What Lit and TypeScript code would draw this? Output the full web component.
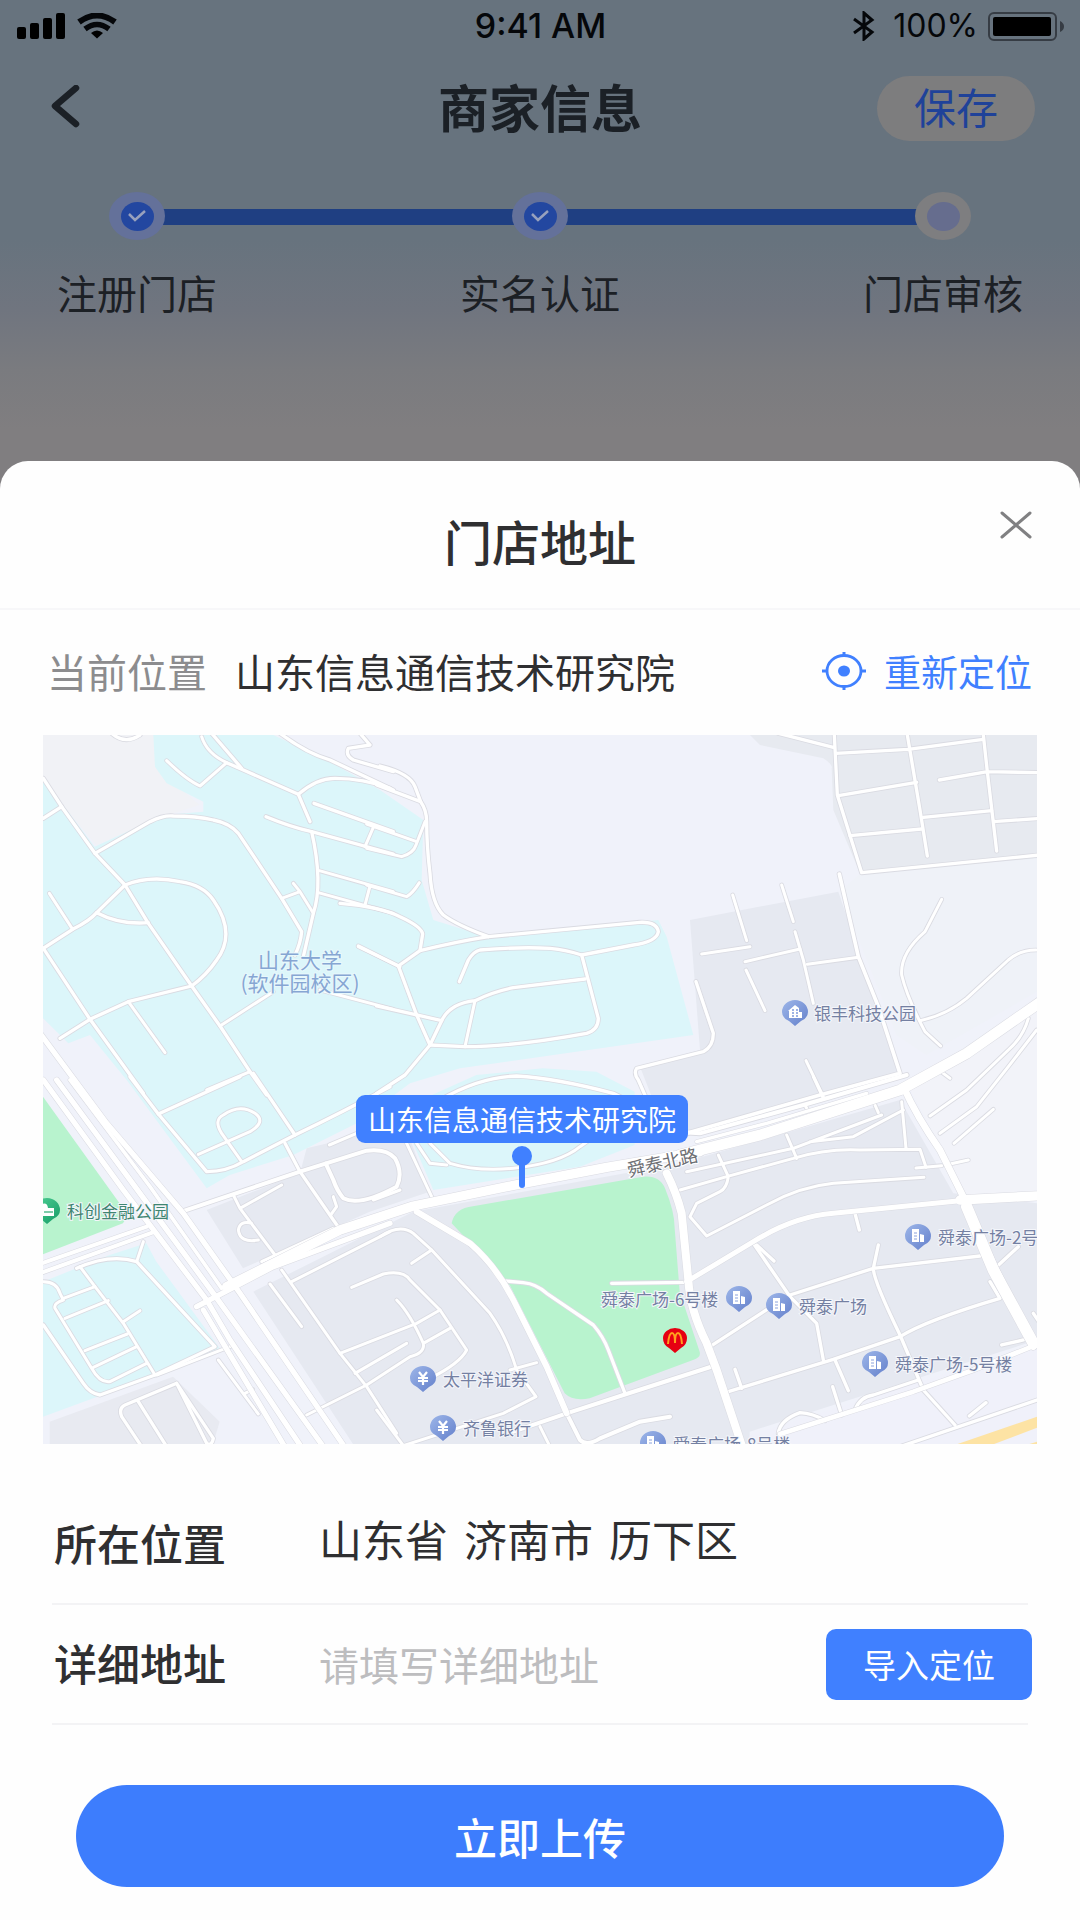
import { LitElement, html, svg, css } from "lit";
import { customElement, property } from "lit/decorators.js";

/* Map survey sheets: origin of each sheet on the map canvas; road data uses sheet units (3 per map unit). */
const SHEETS: Record<string, string> = {
  A: "translate(-3 -5) scale(.33333)",
  B: "translate(337 -5) scale(.33333)",
  C: "translate(657 -5) scale(.33333)",
  D: "translate(-3 345) scale(.33333)",
  E: "translate(337 345) scale(.33333)",
  F: "translate(657 345) scale(.33333)",
};

type Road = [sheet: string, width: number, d: string];

const ROADS: Road[] = [
  // north-west campus
  ["A", 10, "M10 145L65 230L165 370L255 465L325 580L455 768L540 888L630 1025L680 1095"],
  ["A", 10, "M10 265L65 230"],
  ["A", 10, "M215 10Q255 45 300 15"],
  ["A", 10, "M165 370L330 275Q370 255 400 258Q470 258 520 270Q570 280 595 310L725 505L785 605Q782 640 765 675"],
  ["A", 10, "M170 548L255 465Q330 435 420 455Q490 465 520 510Q590 610 530 690Q500 735 455 768L265 815L150 868L60 925"],
  ["A", 9, "M28 490L98 598"],
  ["A", 10, "M10 655L98 598Q150 572 170 548Q240 585 325 578"],
  ["A", 10, "M10 655L150 868L310 1090"],
  ["A", 9, "M265 815L375 968"],
  ["A", 9, "M380 92Q440 150 480 168L560 98Q500 70 485 20"],
  ["A", 10, "M515 10L605 115"],
  ["A", 10, "M560 98L610 120L775 193L810 275"],
  ["A", 10, "M775 193Q830 145 885 145Q970 145 1050 175"],
  ["A", 10, "M720 10Q800 70 870 90L1060 180"],
  ["A", 10, "M960 10L990 45L925 55Q915 75 940 90L1060 125"],
  ["A", 10, "M678 260Q750 290 815 305L1060 372"],
  ["A", 10, "M822 220L1060 305"],
  ["A", 9, "M1000 292L975 350"],
  ["A", 10, "M815 305Q850 460 820 550L790 680"],
  ["A", 9, "M838 422L1060 485"],
  ["A", 9, "M835 488L1060 550"],
  ["A", 9, "M990 468L975 525"],
  ["A", 9, "M725 505L780 485L820 550M780 485L760 460"],
  ["A", 9, "M540 888L700 785"],
  ["A", 9, "M955 650L1080 710"],
  ["A", 9, "M840 780L1060 838"],
  ["A", 9, "M500 1080L630 1025"],
  // campus, east half
  ["B", 10, "M0 108Q90 130 105 170L122 215"],
  ["B", 10, "M-10 165L122 215Q140 240 140 275Q140 350 150 430Q155 520 190 555Q230 585 325 620"],
  ["B", 9, "M-40 282L110 335"],
  ["B", 9, "M-40 355L65 380Q100 370 108 345L135 275"],
  ["B", 9, "M-40 465L80 500Q98 490 118 458"],
  ["B", 10, "M-120 520Q0 530 60 560Q125 590 128 612L120 662L55 708L110 855L150 945L75 1035L-10 1090"],
  ["B", 10, "M-65 648L55 708"],
  ["B", 10, "M120 662Q230 635 325 620L780 577Q830 575 835 605Q830 635 760 645L605 675"],
  ["B", 10, "M238 755L265 690Q280 665 300 660Q420 650 510 655Q560 660 605 675L655 865Q655 900 620 910Q400 950 255 950L150 945"],
  ["B", 10, "M-10 828L110 855L185 872L150 945"],
  ["B", 10, "M185 872Q210 820 285 812Q340 785 400 773L615 747"],
  ["B", 9, "M285 812L255 950"],
  ["B", 10, "M180 1110Q300 1040 410 1038Q530 1045 700 1090L760 1120"],
  // central block
  ["B", 9, "M965 672L1110 650"],
  ["B", 10, "M948 755L1000 910Q1000 950 970 965L770 1015Q760 1030 775 1050L810 1130"],
  ["C", 9, "M98 495L140 632"],
  ["C", 9, "M245 465L280 575M285 605L310 690L340 820"],
  ["C", 9, "M135 695L300 657M322 703L475 682M138 720L195 842"],
  ["C", 11, "M418 432L475 680L535 830L600 1030L360 1095L-40 1210"],
  ["C", 9, "M318 992L370 1100"],
  // north-east grid
  ["C", 10, "M235 10L400 52M403 15L412 195L485 428L1020 375"],
  ["C", 10, "M408 70L625 58L850 28M622 15L660 240L682 378"],
  ["C", 10, "M415 197L650 157M450 317L665 297M670 262L875 242"],
  ["C", 10, "M850 15L862 125L890 363M718 150L862 125L1020 128M880 275L1020 265"],
  // eastern slope
  ["C", 9, "M725 508L675 605Q600 670 605 735Q620 800 675 905L722 948"],
  ["C", 9, "M660 872Q740 855 800 805L925 690Q960 660 1008 660"],
  ["C", 9, "M985 865Q970 920 925 960L800 1080L690 1158"],
  ["C", 9, "M1010 900L925 1010L830 1130L720 1210"],
  ["F", 9, "M880 88L762 190"],
  ["C", 9, "M710 1015L750 1045"],
  // south-west campus and surroundings
  ["D", 10, "M270 -10L355 102L500 275Q560 275 610 245L765 165Q900 100 1050 20"],
  ["D", 10, "M355 102L600 -10M640 -20L765 165"],
  ["D", 9, "M475 223L630 155Q680 125 645 100Q600 70 550 105Q520 120 545 160L605 245"],
  ["D", 10, "M735 190L780 275L880 420L905 455"],
  ["D", 12, "M425 395L780 275L980 212Q1040 205 1065 235Q1090 280 1070 320Q960 380 910 355Q890 330 880 300L857 250"],
  ["D", 9, "M868 195L950 160"],
  ["D", 9, "M580 345L600 385L725 315M600 385L705 525M655 480Q600 490 595 450Q600 420 635 430"],
  ["D", 9, "M665 545L880 445M880 350L890 380L872 405"],
  ["D", 10, "M110 565Q210 520 290 545L525 800L345 885L180 945Q150 940 130 910L10 735"],
  ["D", 9, "M310 485L290 545M120 560L165 620L250 730L345 885"],
  ["D", 9, "M10 605Q50 605 60 640L70 660Q40 670 45 685L155 865Q180 910 210 905L320 850"],
  ["D", 9, "M70 655L165 620M75 715L205 662M250 725L300 692M135 812L262 762M160 862L290 800"],
  ["D", 10, "M305 1100L245 1010Q235 985 255 975L410 910L520 1075Q515 1100 500 1090L410 910M295 965L380 1100"],
  ["D", 9, "M350 885L570 800M535 840L655 1002M615 940L638 928"],
  ["D", 9, "M690 612L785 740M725 570L900 820L980 920L1070 1060"],
  ["D", 9, "M755 605L1050 455M935 622L1030 582Q1090 570 1110 600L1200 690L1280 810Q1260 850 1170 895"],
  ["D", 9, "M900 820L1130 730L1200 690M945 880L1100 790"],
  ["D", 9, "M800 1005L980 915L1110 830Q1155 820 1150 790Q1110 700 1070 660M1150 790L1230 745"],
  ["D", 9, "M1020 470Q1080 430 1120 460L1175 510L1350 700Q1400 770 1430 870L1488 950L1390 1000L1050 1110"],
  ["D", 9, "M1115 550L1175 510"],
  ["E", 9, "M-10 990L80 1110"],
  // shapes around the marker
  ["E", 9, "M80 190L155 350M110 190L150 250L200 255M150 190L210 250Q290 275 400 265Q540 250 600 200L650 165"],
  ["E", 9, "M60 330L-20 360"],
  ["E", 10, "M365 602L430 608Q470 612 500 640L640 735Q670 770 685 810L735 940"],
  ["E", 10, "M695 610L920 607"],
  ["E", 9, "M480 1040L510 1100M390 870L470 848"],
  // south-east streets
  ["F", 12, "M-160 150L0 160L310 75L620 -15"],
  ["F", 9, "M340 -10L370 55M315 75L335 115M525 75L535 98"],
  ["F", 9, "M-40 275L280 205L545 105M330 185L460 170L610 90"],
  ["F", 9, "M-60 330L80 290L280 235Q380 205 480 210L660 208L678 262M55 225L85 290Q80 325 60 335L-10 370L-30 410L20 468L200 375Q300 320 400 310L672 292M260 165L290 235M605 65L618 205"],
  ["F", 9, "M648 264L725 257M750 252L805 240"],
  ["F", 10, "M465 400L478 450M160 490L270 650L350 730L370 840M170 495L222 543"],
  ["F", 10, "M270 645L520 565L840 528M535 495L520 565Q520 600 600 765L670 930L765 1035"],
  ["F", 10, "M85 935L400 838L600 770Q680 720 900 655L870 605"],
  ["F", 10, "M30 800L260 650M105 868L125 925M405 840L445 932"],
  ["F", 10, "M235 1060Q240 1020 300 998Q340 1000 375 1022M465 990Q480 950 520 945L655 900M398 920L425 1005"],
  ["F", 10, "M890 560L955 500M905 795L970 780M1000 700L1020 730"],
  ["F", 10, "M600 1100L1020 957M808 1008L858 968"],
  ["E", 12, "M400 1055L560 1000L730 945L1010 855M560 1000L600 1080Q620 1100 660 1075L780 1025L870 1010"],
];

const MAIN_ROADS: Road[] = [
  ["D", 16, "M0 -140L200 130L430 400L600 640L920 1110"],
  ["D", 16, "M10 0L250 330L500 660L570 780L790 1110"],
  ["D", 16, "M50 0L300 340L520 640L850 1100"],
  ["D", 11, "M90 0L330 320L545 625"],
  ["D", 16, "M490 690L740 1110"],
  ["D", 12, "M0 552L320 440M0 580L345 455"],
  ["D", 16, "M470 680L700 560L1050 430"],
  ["D", 28, "M560 620L900 450L1120 378L1450 310L1700 262L1980 215"],
  ["F", 32, "M-60 225L180 165L600 30L800 -80L1030 -240"],
  ["F", 10, "M-10 185L200 130L500 40"],
  ["E", 18, "M110 395L270 490Q350 560 400 660L500 860L560 1000"],
  ["E", 24, "M860 280Q890 340 905 400L925 600Q930 690 980 790L1010 870L1090 1110"],
  ["F", 20, "M610 20Q650 110 720 210L790 350L840 470L1000 800"],
  ["F", 28, "M780 360L1020 347"],
  ["F", 15, "M-40 605L160 485Q280 410 400 400L780 362"],
  ["F", 34, "M800 380L880 570L1000 790"],
  ["F", 14, "M240 1062L640 935L820 870L1020 790"],
];

type Poi = [kind: "building" | "house" | "yen" | "leaf", x: number, y: number, tx: number, label: string];

const POIS: Poi[] = [
  ["house", 752, 277, 771, "银丰科技公园"],
  ["leaf", 4, 475, 24, "科创金融公园"],
  ["building", 696, 563, 558, "舜泰广场-6号楼"],
  ["building", 736, 570, 756, "舜泰广场"],
  ["building", 875, 501, 895, "舜泰广场-2号楼"],
  ["building", 832, 628, 852, "舜泰广场-5号楼"],
  ["yen", 380, 643, 400, "太平洋证券"],
  ["yen", 400, 692, 420, "齐鲁银行"],
  ["building", 610, 708, 630, "舜泰广场-8号楼"],
];

const GLYPHS = {
  building: svg`<path d="M-6 6V-7H1V6ZM2 6V-2L6 -1V6Z" fill="#fff"/><path d="M-4 -3H-1M-4 0H-1M-4 3H-1" stroke="#8aa2dc" stroke-width="1"/>`,
  house: svg`<path d="M-7 -1L0 -7L4 -4V0H7V6H-6V-1Z" fill="#fff"/><path d="M-3 1H-1M-3 4H-1M1 1H3M1 4H3M-3 -2H-1M1 -2H3" stroke="#7f9bdb" stroke-width="1.4"/>`,
  yen: svg`<path d="M-4 -6L0 -1L4 -6M0 -1V7M-5 0H5M-5 3H5" stroke="#fff" stroke-width="2.2" fill="none"/>`,
  leaf: svg`<path d="M-7 -5Q0 -9 1 -2H7V6H-7Z" fill="#fff"/><path d="M-3 2H6" stroke="#2bab74" stroke-width="1.2"/>`,
};

@customElement("district-map")
export class DistrictMap extends LitElement {
  @property() place = "";

  static styles = css`
    :host { display: block; position: relative; overflow: hidden; }
    .canvas { display: block; width: 100%; height: auto; font-family: "Noto Sans CJK SC", sans-serif; }
    .casing path { fill: none; stroke: #dadbe2; stroke-linejoin: round; stroke-linecap: round; }
    .surface path { fill: none; stroke: #fff; stroke-linejoin: round; stroke-linecap: round; }
    .poi { font-size: 17px; fill: #7480a2; stroke: #f4f6fb; stroke-width: 2px; paint-order: stroke; }
    .poi.park { fill: #3f8571; }
    .campus { font-size: 21px; fill: #86a6d3; text-anchor: middle; stroke: #e8f8fc; stroke-width: 2px; paint-order: stroke; }
    .street { font-size: 18px; fill: #6d6f74; text-anchor: middle; stroke: #fff; stroke-width: 2px; paint-order: stroke; }
    .marker {
      position: absolute; left: 48.2%; top: 360px; transform: translateX(-50%);
      display: flex; flex-direction: column; align-items: center; gap: 3px;
    }
    .bubble {
      padding: 0 12px; border-radius: 9px; background: #4080ff; color: #fff;
      font-size: 28px; line-height: 48px; white-space: nowrap;
    }
    .pin { display: block; width: 20px; height: 42px; }
  `;

  private strokes(list: Road[], extra: number) {
    return list.map(([s, w, d]) => svg`<path transform=${SHEETS[s]} stroke-width=${w + extra} d=${d}></path>`);
  }

  render() {
    return html`
      <svg class="canvas" viewBox="0 0 994 709" role="img" aria-label=${this.place}>
        <defs>
          <linearGradient id="blue" x1="0" y1="0" x2="1" y2="1">
            <stop offset="0" stop-color="#9db6e9" /><stop offset="1" stop-color="#6480cb" />
          </linearGradient>
          <linearGradient id="green" x1="0" y1="0" x2="1" y2="1">
            <stop offset="0" stop-color="#4fcf94" /><stop offset="1" stop-color="#159c67" />
          </linearGradient>
        </defs>
        <rect width="994" height="709" fill="#f0f2fa" />
        <g transform="scale(.33333)">
          <path fill="#f1f2f6" d="M0 0H340V100L470 210L360 245L160 330L0 140Z" />
          <path fill="#eff2f8" d="M2470 400L2983 370V770L2650 960L2560 900L2390 470Z" />
          <path fill="#f2f3f9" d="M2600 1060L2983 800V1380H2770Z" />
          <path fill="#e7eaf0" d="M2121 0L2151 30L2341 70Q2371 90 2366 100L2371 225L2451 415L2983 370V0Z" />
          <path fill="#dcf6fa" d="M331 0L336 95L371 145L481 200V230L361 240L155 335L0 130V850L76 925L141 900L251 1035L491 1360L560 1320L751 1260L941 1165L1101 1045L1251 1000L1951 900L1871 605L1846 555L1331 605L1171 555L1136 435L1141 255L1011 165L851 75L691 0Z" />
          <path fill="#dcf6fa" d="M1100 1110L1300 1020L1500 1000L1660 1010L1775 1070V1230L1611 1295L1171 1365L1100 1200Z" />
          <path fill="#dcf6fa" d="M0 1640L200 1560L310 1525L340 1580L530 1840L340 1920L0 2045Z" />
          <path fill="#e6e9f1" d="M1941 555L2386 470L2571 1015L1971 1190L1871 1200L1791 995L1971 945Z" />
          <path fill="#e6e9f1" d="M491 1425L771 1315L791 1240L1000 1190L1100 1210L1160 1370L980 1430L600 1600Z" />
          <path fill="#e6e9f1" d="M631 1670L1011 1480L1111 1430L1911 1285L2571 1095L2731 1375L2983 1405V1815L2120 2090V2127H930Z" />
          <path fill="#e8eaf1" d="M20 2060L390 1925L530 2060L510 2127H20Z" />
          <path fill="#f0f1fa" d="M2120 2100L2983 1830V2127H2120Z" />
          <path fill="#b8f3ce" d="M0 1085L255 1440L240 1465L0 1558Z" />
          <path fill="#b8f3ce" d="M1226 1465Q1235 1420 1290 1414L1800 1325Q1850 1320 1866 1360Q1895 1430 1895 1480L1910 1670L1970 1850Q1975 1868 1950 1875L1640 1990Q1590 2000 1565 1975L1400 1650Z" />
        </g>
        <g class="casing">${this.strokes(ROADS, 5)}</g>
        <g class="surface">${this.strokes(ROADS, 0)}</g>
        <g class="casing">${this.strokes(MAIN_ROADS, 3)}</g>
        <g class="surface">${this.strokes(MAIN_ROADS, 0)}</g>
        <path transform=${SHEETS.F} d="M770 1093L1012 1010V1043L880 1093ZM985 1093L1012 1085V1093Z" fill="#fde3a4" />
        <text class="campus" x="257" y="233">山东大学</text>
        <text class="campus" x="257" y="256">(软件园校区)</text>
        <text class="street" transform="translate(621 434) rotate(-13)">舜泰北路</text>
        ${POIS.map(([kind, x, y, tx, label]) => svg`
          <g transform="translate(${x} ${y})">
            <path d="M0 14L-6 9Q-13 6 -13 0A13 12 0 0 1 13 0Q13 6 6 9Z" fill=${kind === "leaf" ? "url(#green)" : "url(#blue)"}></path>
            ${GLYPHS[kind]}
          </g>
          <text class=${kind === "leaf" ? "poi park" : "poi"} x=${tx} y=${y + 8}>${label}</text>`)}
        <g transform="translate(632 604)">
          <path d="M0 14L-6 9Q-12 6 -12 -1A12 10 0 0 1 12 -1Q12 6 6 9Z" fill="#e60012" />
          <path d="M-7 5Q-6 -6 -3 -6Q0 -6 0 4Q0 -6 3 -6Q6 -6 7 5" fill="none" stroke="#ffa01e" stroke-width="2" />
        </g>
      </svg>
      <div class="marker">
        <span class="bubble">${this.place}</span>
        <svg class="pin" viewBox="0 0 20 42" aria-hidden="true">
          <path d="M10 10V39" stroke="#4080ff" stroke-width="6" stroke-linecap="round" />
          <circle cx="10" cy="10" r="10" fill="#4080ff" />
        </svg>
      </div>
    `;
  }
}

@customElement("app-root")
export class AppRoot extends LitElement {
  static styles = css`
    :host {
      display: flex; flex-direction: column; min-height: 100vh; color: #2f2f31;
      font-family: "Noto Sans CJK SC", sans-serif;
      background: linear-gradient(#67737e 0, #67737e 240px, #70757f 310px, #7a7b7f 370px, #807e80 430px);
    }
    * { box-sizing: border-box; }
    button { margin: 0; padding: 0; border: 0; background: none; color: inherit; font: inherit; cursor: pointer; }
    svg { display: block; flex: none; }
    h1, h2, ol { margin: 0; padding: 0; }

    .status {
      display: grid; grid-template-columns: 1fr auto 1fr; align-items: center; height: 52px;
      padding: 0 16px 0 17px; color: #05070a;
      font: 500 34px/52px Inter, sans-serif;
    }
    .signals { display: flex; align-items: center; gap: 12px; }
    .power { display: flex; align-items: center; justify-content: flex-end; gap: 10px; font-size: 32px; font-weight: 400; }
    .power .charge { padding-left: 8px; }

    .nav {
      display: grid; grid-template-columns: 1fr auto 1fr; align-items: center; height: 112px;
      padding: 0 45px; color: #1b2026;
    }
    .nav h1 { padding-bottom: 4px; font-size: 51px; font-weight: 700; line-height: 64px; }
    .back { justify-self: start; display: grid; place-items: center; width: 40px; height: 56px; }
    .save {
      justify-self: end; width: 158px; height: 65px; padding-bottom: 4px; border-radius: 33px;
      background: #7d7d7e; color: #1f4299; font-size: 42px; line-height: 60px;
    }

    .steps { display: flex; justify-content: space-between; padding: 28px 57px 0; list-style: none; position: relative; }
    .step { display: flex; flex-direction: column; align-items: center; gap: 22px; width: 160px; font-size: 40px; line-height: 60px; color: #1c2025; white-space: nowrap; }
    .steps::before { content: ""; position: absolute; left: 137px; right: 137px; top: 45px; height: 16px; background: #1f3f82; }
    .node { display: grid; place-items: center; width: 56px; height: 48px; border-radius: 50%; background: #64719a; position: relative; }
    .node.open { background: #7e7e80; }
    .core { display: grid; place-items: center; width: 33px; height: 29px; border-radius: 50%; background: #2347a0; }
    .open .core { background: #666d8e; }

    .sheet {
      display: flex; flex-direction: column; flex: 1; margin-top: 139px;
      border-radius: 28px 28px 0 0; background: #fefefe;
    }
    .head {
      display: grid; grid-template-columns: 1fr auto 1fr; align-items: center; height: 149px;
      padding: 10px 40px 0; border-bottom: 2px solid #f7f7f9;
    }
    .head h2 { grid-column: 2; font-size: 48px; font-weight: 500; line-height: 64px; }
    .close { justify-self: end; align-self: start; display: grid; place-items: center; width: 48px; height: 48px; margin-top: 30px; }

    .current { display: flex; align-items: center; height: 125px; padding: 0 48px 4px 47px; font-size: 40px; line-height: 60px; white-space: nowrap; }
    .current .term { color: #8c8c8e; margin-right: 28px; }
    .relocate { display: flex; align-items: center; gap: 18px; margin-left: auto; color: #4080ff; font-size: 37px; }
    .map { margin: 0 43px; }

    .fields { display: flex; flex-direction: column; padding: 41px 52px 0; }
    .field { display: flex; align-items: center; height: 120px; border-bottom: 2px solid #f3f3f5; font-size: 43px; line-height: 64px; }
    .name { width: 267px; flex: none; padding: 0 0 4px 2px; font-weight: 500; }
    .region { display: flex; gap: 16px; padding-bottom: 12px; }
    .detail {
      flex: 1; min-width: 0; height: 72px; padding: 0; border: 0; outline: 0; background: none;
      color: inherit; font: 400 40px/60px "Noto Sans CJK SC", sans-serif;
    }
    .detail::placeholder { color: #bdbdbf; opacity: 1; }
    .import {
      flex: none; width: 206px; height: 71px; margin-right: -4px; border-radius: 10px;
      background: #4080ff; color: #fff; font-size: 33px; line-height: 70px;
    }
    .upload {
      height: 102px; margin: 60px 76px 32px; border-radius: 51px;
      background: #3d7dfd; color: #fff; font-size: 43px; font-weight: 500; line-height: 100px;
    }
  `;

  private steps = [
    { label: "注册门店", done: true },
    { label: "实名认证", done: true },
    { label: "门店审核", done: false },
  ];
  private place = "山东信息通信技术研究院";
  private region = ["山东省", "济南市", "历下区"];

  render() {
    return html`
      <div class="status">
        <div class="signals">
          <svg width="48" height="26" viewBox="0 0 48 26" aria-hidden="true">
            <rect x="0" y="14" width="9" height="12" rx="2" /><rect x="13" y="10" width="9" height="16" rx="2" />
            <rect x="26" y="5" width="9" height="21" rx="2" /><rect x="39" y="0" width="9" height="26" rx="2" />
          </svg>
          <svg width="40" height="26" viewBox="0 0 40 26" aria-hidden="true">
            <path d="M2 9Q20 -4 38 9" fill="none" stroke="currentColor" stroke-width="6" />
            <path d="M8 16Q20 7 32 16" fill="none" stroke="currentColor" stroke-width="5.500" />
            <path d="M14 20Q20 15 26 20L20 25.500Z" />
          </svg>
        </div>
        <span>9:41 AM</span>
        <div class="power">
          <svg width="22" height="30" viewBox="0 0 22 30" aria-hidden="true">
            <path d="M1 8L19 21L11 28V2L19 9L1 22" fill="none" stroke="currentColor" stroke-width="3" />
          </svg>
          <span class="charge">100%</span>
          <svg width="76" height="29" viewBox="0 0 76 29" aria-hidden="true">
            <rect x="1" y="1" width="67" height="27" rx="5" fill="none" stroke="#363c44" stroke-width="2" />
            <rect x="5" y="5" width="58" height="19" rx="2" />
            <path d="M72 9Q76 11 76 14.500Q76 18 72 20Z" fill="#363c44" />
          </svg>
        </div>
      </div>

      <header class="nav">
        <button class="back" aria-label="返回">
          <svg width="30" height="46" viewBox="0 0 30 46" aria-hidden="true">
            <path d="M26 3L5 21L26 39" fill="none" stroke="currentColor" stroke-width="6.500" stroke-linecap="round" stroke-linejoin="round" />
          </svg>
        </button>
        <h1>商家信息</h1>
        <button class="save">保存</button>
      </header>

      <ol class="steps">
        ${this.steps.map((s) => html`
          <li class="step">
            <span class="node ${s.done ? "" : "open"}"><span class="core">
              ${s.done ? html`<svg width="20" height="14" viewBox="0 0 20 14" aria-hidden="true">
                <path d="M2 5L8 11L18 2" fill="none" stroke="#98a1bd" stroke-width="2.500" /></svg>` : ""}
            </span></span>
            <span>${s.label}</span>
          </li>`)}
      </ol>

      <section class="sheet" role="dialog" aria-labelledby="sheet-title">
        <div class="head">
          <h2 id="sheet-title">门店地址</h2>
          <button class="close" aria-label="关闭">
            <svg width="32" height="28" viewBox="0 0 32 28" aria-hidden="true">
              <path d="M2 2L30 26M30 2L2 26" stroke="#808082" stroke-width="3" stroke-linecap="round" />
            </svg>
          </button>
        </div>

        <div class="current">
          <span class="term">当前位置</span>
          <span>${this.place}</span>
          <button class="relocate">
            <svg width="44" height="38" viewBox="0 0 44 38" aria-hidden="true" fill="none" stroke="currentColor">
              <ellipse cx="22" cy="19" rx="17" ry="15.500" stroke-width="2.800" />
              <path d="M22 0V5M22 33V38M0 19H6M38 19H44" stroke-width="3" />
              <ellipse cx="22" cy="19" rx="6" ry="5.500" fill="currentColor" stroke="none" />
            </svg>
            重新定位
          </button>
        </div>

        <district-map class="map" place=${this.place}></district-map>

        <div class="fields">
          <div class="field">
            <span class="name">所在位置</span>
            <span class="region">${this.region.map((r) => html`<span>${r}</span>`)}</span>
          </div>
          <div class="field">
            <label class="name" for="detail">详细地址</label>
            <input class="detail" id="detail" type="text" placeholder="请填写详细地址" />
            <button class="import">导入定位</button>
          </div>
        </div>
        <button class="upload">立即上传</button>
      </section>
    `;
  }
}
